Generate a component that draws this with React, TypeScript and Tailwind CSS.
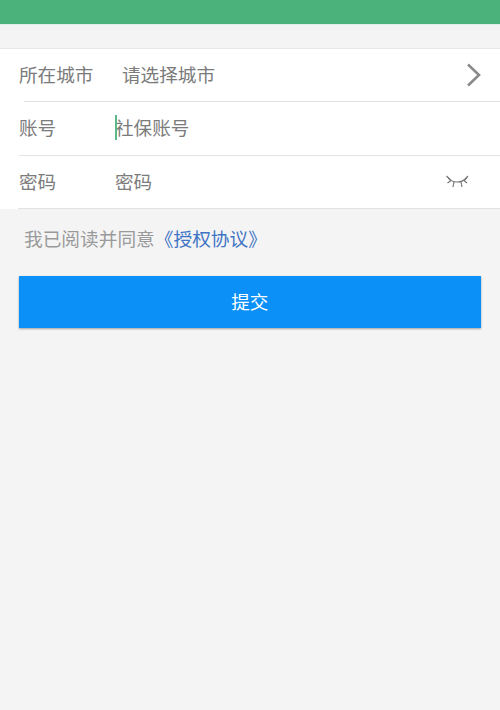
const font = { fontFamily: '"Noto Sans CJK SC", sans-serif' };

function Row({ label, inset, children }: { label: string; inset: string; children: React.ReactNode }) {
  return (
    <div className="relative bg-white">
      <div className="flex h-[52.33px] items-center pb-[2px] pl-[19px]">
        <span className="w-[96px] shrink-0 text-[18.6px] leading-none text-[#7b7b7b]">{label}</span>
        {children}
      </div>
      <div className={`h-px bg-[#e2e2e2] ${inset}`} />
    </div>
  );
}

export default function App() {
  return (
    <div style={font} className="min-h-[710px] w-[500px] bg-[#f4f4f5]">
      <div className="h-[24px] bg-[#4bb27b] shadow-[0_1px_0_#dfeee6]" />
      <div className="h-[25px] border-b border-[#e8e8e8]" />

      <div className="flex flex-col">
        <Row label="所在城市" inset="ml-[24px]">
          <span className="pl-[7px] text-[18.6px] leading-none text-[#7b7b7b]">请选择城市</span>
          <svg className="ml-auto mr-[18px] translate-y-[1px]" width="16" height="26" viewBox="0 0 16 26" fill="none">
            <path d="M2 2.5L13 13L2 23.5" stroke="#8a8a8a" strokeWidth="2.6" />
          </svg>
        </Row>
        <Row label="账号" inset="ml-[19px]">
          <span className="relative text-[18.6px] leading-none text-[#7b7b7b]">
            <span className="absolute left-0 top-[-3px] h-[25px] w-[2px] bg-[#5cb98a]" />
            社保账号
          </span>
        </Row>
        <Row label="密码" inset="ml-[18px]">
          <span className="text-[18.6px] leading-none text-[#7b7b7b]">密码</span>
          <svg className="ml-auto mr-[31px] translate-y-[1px]" width="23" height="14" viewBox="0 0 23 14" fill="none" stroke="#777777" strokeWidth="1.2">
            <path d="M2 2.5C6 8.5 16 8.5 21 2.5" />
            <path d="M0.5 1L5 5.5M1.5 8L5 5.5M22 1L18 5.5M21 8L18 5.5M8 7L7 12M15 7L16 12" />
          </svg>
        </Row>
      </div>

      <div className="pl-[24px] pt-[17px] text-[18.7px] leading-[24px] text-[#9a9a9a]">
        我已阅读并同意<span className="text-[#3f74c4]">《授权协议》</span>
      </div>

      <button
        type="button"
        className="ml-[18.5px] mt-[26px] flex h-[52px] w-[462.5px] items-center justify-center bg-[#0a90f6] pb-[2px] text-[18.6px] text-white shadow-[0_1px_2px_rgba(0,0,0,0.35)]"
      >
        提交
      </button>
    </div>
  );
}
